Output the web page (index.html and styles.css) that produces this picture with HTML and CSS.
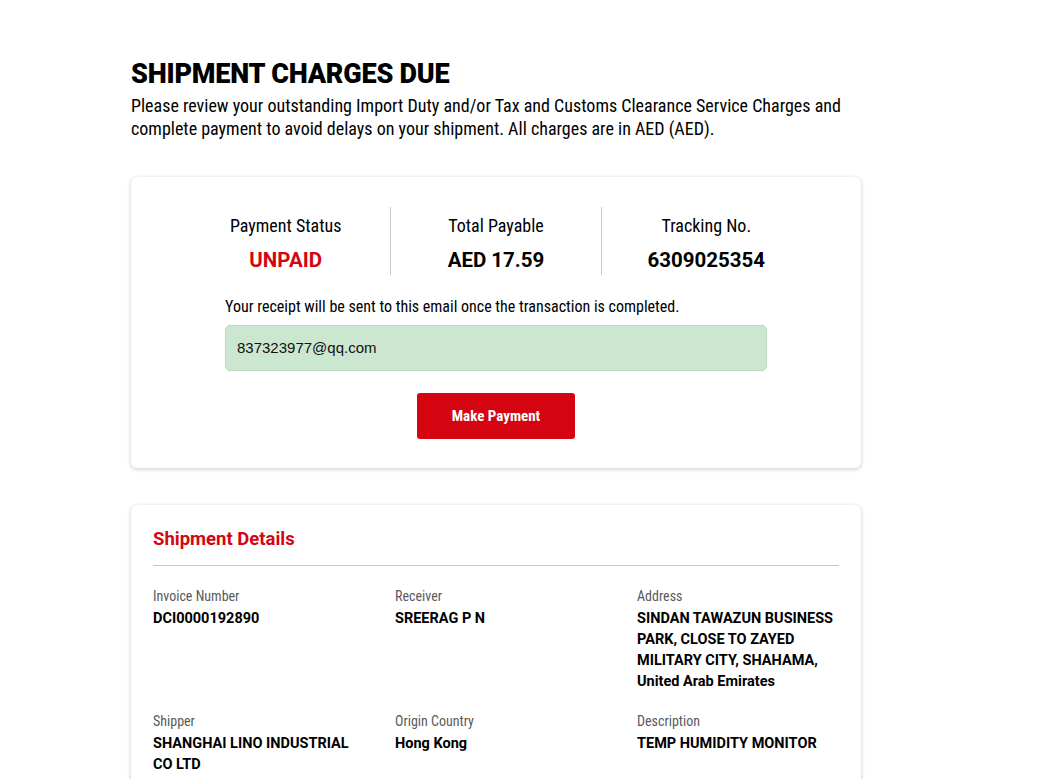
FILE: index.html
```html
<!DOCTYPE html>
<html>
<head>
<meta charset="utf-8">
<link rel="stylesheet" href="styles.css">
</head>
<body>
<main class="page">
  <h1 class="title">SHIPMENT CHARGES DUE</h1>
  <p class="intro">Please review your outstanding Import Duty and/or Tax and Customs Clearance Service Charges and complete payment to avoid delays on your shipment. All charges are in AED (AED).</p>

  <section class="card pay-card">
    <div class="stats">
      <div class="stat">
        <div class="stat-label">Payment Status</div>
        <div class="stat-value red">UNPAID</div>
      </div>
      <div class="stat">
        <div class="stat-label">Total Payable</div>
        <div class="stat-value">AED 17.59</div>
      </div>
      <div class="stat">
        <div class="stat-label">Tracking No.</div>
        <div class="stat-value">6309025354</div>
      </div>
    </div>
    <div class="email-block">
      <p class="email-note">Your receipt will be sent to this email once the transaction is completed.</p>
      <div class="email-input">837323977@qq.com</div>
    </div>
    <button class="pay-btn">Make Payment</button>
  </section>

  <section class="card details-card">
    <h2 class="details-title">Shipment Details</h2>
    <div class="details-grid">
      <div class="field">
        <div class="field-label">Invoice Number</div>
        <div class="field-value">DCI0000192890</div>
      </div>
      <div class="field">
        <div class="field-label">Receiver</div>
        <div class="field-value">SREERAG P N</div>
      </div>
      <div class="field">
        <div class="field-label">Address</div>
        <div class="field-value">SINDAN TAWAZUN BUSINESS PARK, CLOSE TO ZAYED MILITARY CITY, SHAHAMA, United Arab Emirates</div>
      </div>
      <div class="field">
        <div class="field-label">Shipper</div>
        <div class="field-value">SHANGHAI LINO INDUSTRIAL CO LTD</div>
      </div>
      <div class="field">
        <div class="field-label">Origin Country</div>
        <div class="field-value">Hong Kong</div>
      </div>
      <div class="field">
        <div class="field-label">Description</div>
        <div class="field-value">TEMP HUMIDITY MONITOR</div>
      </div>
    </div>
  </section>
</main>
</body>
</html>
```

FILE: styles.css
```css
* { box-sizing: border-box; }
html, body { margin: 0; padding: 0; background: #fff; }
body {
  font-family: "Roboto Condensed", "Liberation Sans Narrow", "DejaVu Sans Condensed", sans-serif;
  color: #000;
}
.page {
  width: 730px;
  margin-left: 131px;
  padding-top: 57px;
}
.title {
  margin: 0;
  font-family: Roboto, "Liberation Sans", sans-serif;
  font-size: 27px;
  line-height: 34px;
  font-weight: 900;
  letter-spacing: -0.2px;
}
.intro {
  margin: 3px 0 0;
  font-size: 18px;
  line-height: 23px;
}
.card {
  background: #fff;
  border-radius: 6px;
  box-shadow: 0 1px 4px rgba(0,0,0,0.22);
}
.pay-card {
  margin-top: 37px;
  padding: 30px 0 29px;
  display: flex;
  flex-direction: column;
  align-items: center;
}
.stats {
  display: flex;
  width: 630px;
}
.stat {
  flex: 1;
  text-align: center;
  padding: 7px 0 2px;
  border-left: 1px solid #ccc;
}
.stat:first-child { border-left: none; }
.stat-label {
  font-size: 18px;
  line-height: 24px;
}
.stat-value {
  margin-top: 9px;
  font-family: Roboto, "Liberation Sans", sans-serif;
  font-size: 20.5px;
  line-height: 26px;
  font-weight: 700;
}
.red { color: #d40511; }
.email-block {
  width: 542px;
  margin-top: 22px;
}
.email-note {
  margin: 0;
  font-size: 16px;
  line-height: 20px;
}
.email-input {
  margin-top: 8px;
  height: 46px;
  background: #cce7cf;
  border: 1px solid #bcd6bf;
  border-radius: 5px;
  padding: 0 11px;
  font-family: "Liberation Sans", sans-serif;
  font-size: 15px;
  line-height: 44px;
  color: #111;
}
.pay-btn {
  margin-top: 22px;
  width: 158px;
  height: 46px;
  background: #d40511;
  color: #fff;
  border: none;
  border-radius: 3px;
  font-family: inherit;
  font-size: 15px;
  font-weight: 700;
}
.details-card {
  margin-top: 37px;
  padding: 22px 22px 30px;
}
.details-title {
  margin: 0;
  color: #d40511;
  font-family: Roboto, "Liberation Sans", sans-serif;
  font-size: 18.5px;
  line-height: 24px;
  font-weight: 700;
  padding-bottom: 14px;
  border-bottom: 1px solid #c8c8c8;
}
.details-grid {
  display: grid;
  grid-template-columns: 242px 242px 1fr;
  row-gap: 20px;
  padding-top: 21px;
}
.field-label {
  font-size: 14px;
  line-height: 18px;
  color: #5a5a5a;
}
.field-value {
  margin-top: 3px;
  font-family: Roboto, "Liberation Sans", sans-serif;
  font-size: 14.5px;
  line-height: 21px;
  font-weight: 700;
  padding-right: 30px;
}
.field:nth-child(3n) .field-value { padding-right: 0; }
```
